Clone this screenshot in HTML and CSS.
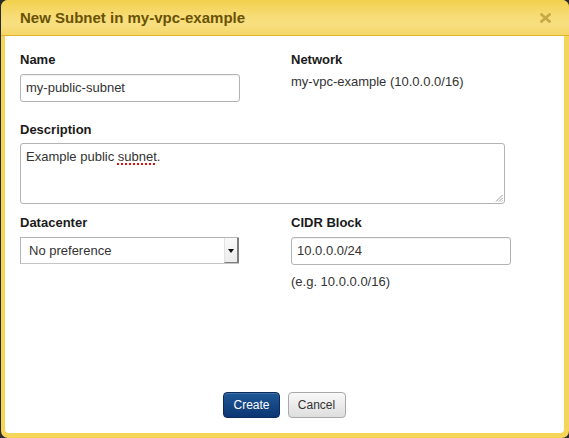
FILE: index.html
```html
<!DOCTYPE html>
<html>
<head>
<meta charset="utf-8">
<link rel="stylesheet" href="styles.css">
</head>
<body>
<div class="dialog">
  <div class="header">
    <span class="title">New Subnet in my-vpc-example</span>
    <svg class="close" width="11" height="10" viewBox="0 0 11 10"><path d="M1.5 1.5 L9.5 8.5 M9.5 1.5 L1.5 8.5" stroke="#c6a845" stroke-width="2.6" stroke-linecap="square"/></svg>
  </div>
  <div class="body">
    <div class="row">
      <div class="col">
        <div class="label">Name</div>
        <div class="input">my-public-subnet</div>
      </div>
      <div class="col">
        <div class="label">Network</div>
        <div class="value">my-vpc-example (10.0.0.0/16)</div>
      </div>
    </div>
    <div class="desc">
      <div class="label label-desc">Description</div>
      <div class="textarea">Example public <span class="spell">subnet</span>.
        <svg class="grip" width="8" height="8" viewBox="0 0 8 8"><path d="M7.5 1 L1 7.5 M7.5 4 L4 7.5 M7.5 6.5 L6.5 7.5" stroke="#9a9a9a" stroke-width="1"/></svg>
      </div>
    </div>
    <div class="row row3">
      <div class="col">
        <div class="label">Datacenter</div>
        <div class="select">
          <span class="select-text">No preference</span>
          <span class="select-btn"><span class="arrow"></span></span>
        </div>
      </div>
      <div class="col">
        <div class="label">CIDR Block</div>
        <div class="input">10.0.0.0/24</div>
        <div class="hint">(e.g. 10.0.0.0/16)</div>
      </div>
    </div>
    <div class="footer">
      <button class="btn btn-primary">Create</button>
      <button class="btn btn-default">Cancel</button>
    </div>
  </div>
</div>
</body>
</html>
```
FILE: styles.css
```css
html, body {
  margin: 0;
  padding: 0;
}
body {
  background: #2a2a2a;
  width: 569px;
  height: 438px;
  overflow: hidden;
  font-family: "Liberation Sans", Arial, sans-serif;
}
.dialog {
  margin-left: 1px;
  width: 568px;
  height: 438px;
  background: #f5d55a;
  border-radius: 7px;
  display: flex;
  flex-direction: column;
  box-sizing: border-box;
}
.header {
  height: 35px;
  border-bottom: 1px solid #dfb52f;
  border-radius: 7px 7px 0 0;
  background: linear-gradient(#f3d04c 0%, #f7dc76 45%, #f8df80 70%, #f5d768 100%);
  display: flex;
  align-items: center;
  justify-content: space-between;
  padding: 0 18px 0 19px;
  flex: none;
}
.title {
  font-size: 15px;
  font-weight: bold;
  color: #6a5204;
  line-height: 18px;
}
.close {
  display: block;
  margin-top: 1px;
}
.body {
  flex: 1;
  background: #fff;
  margin: 0 5px 5px 4px;
  border-radius: 0 0 4px 4px;
  padding: 16px 15px 15px 15px;
  display: flex;
  flex-direction: column;
}
.row {
  display: grid;
  grid-template-columns: 220px 220px;
  column-gap: 51px;
}
.label {
  font-size: 13px;
  font-weight: bold;
  color: #1a1a1a;
  line-height: 16px;
  margin-bottom: 6px;
}
.label-desc {
  margin-bottom: 5px;
}
.input {
  box-sizing: border-box;
  height: 28px;
  border: 1px solid #b3b3b3;
  border-radius: 3px;
  padding: 0 5px;
  font-size: 13px;
  line-height: 26px;
  color: #333;
  box-shadow: inset 0 1px 1px rgba(0,0,0,0.06);
}
.value {
  font-size: 13px;
  line-height: 16px;
  color: #333;
  margin-top: 1px;
}
.desc {
  margin-top: 20px;
}
.textarea {
  position: relative;
  box-sizing: border-box;
  width: 485px;
  height: 61px;
  border: 1px solid #b3b3b3;
  border-radius: 3px;
  padding: 5px 5px;
  font-size: 13px;
  line-height: 16px;
  color: #333;
}
.spell {
  text-decoration: underline dotted #e01010;
  text-decoration-thickness: 2px;
  text-underline-offset: 2px;
}
.grip {
  position: absolute;
  right: 1px;
  bottom: 1px;
}
.row3 {
  margin-top: 11px;
}
.select {
  box-sizing: border-box;
  width: 219px;
  height: 27px;
  border: 1px solid #b5b5b5;
  border-right: none;
  border-bottom: 1px solid #c5c5c5;
  display: flex;
  align-items: stretch;
  font-size: 13px;
  color: #333;
}
.select-text {
  flex: 1;
  padding-left: 8px;
  line-height: 25px;
}
.select-btn {
  width: 12px;
  background: linear-gradient(#fafafa, #ececec);
  border-left: 1px solid #e2e2e2;
  border-right: 2px solid #7e7e7e;
  border-bottom: 1px solid #7e7e7e;
  display: flex;
  align-items: center;
  justify-content: center;
}
.arrow {
  width: 0;
  height: 0;
  border-left: 3px solid transparent;
  border-right: 3px solid transparent;
  border-top: 4px solid #111;
  margin-top: 1px;
}
.hint {
  margin-top: 9px;
  font-size: 13px;
  line-height: 16px;
  color: #333;
}
.footer {
  margin-top: auto;
  display: flex;
  justify-content: center;
  gap: 8px;
}
.btn {
  height: 26px;
  font-family: "Liberation Sans", Arial, sans-serif;
  font-size: 12px;
  border-radius: 4px;
  padding: 0 9px;
  line-height: 24px;
  margin: 0;
}
.btn-primary {
  color: #fff;
  background: linear-gradient(#1f5896, #0c3673);
  border: 1px solid #0a2c5c;
  box-shadow: inset 0 1px 0 rgba(255,255,255,0.15);
}
.btn-default {
  color: #333;
  background: linear-gradient(#f9f9f9, #dedede);
  border: 1px solid #a9a9a9;
  width: 58px;
}
```
